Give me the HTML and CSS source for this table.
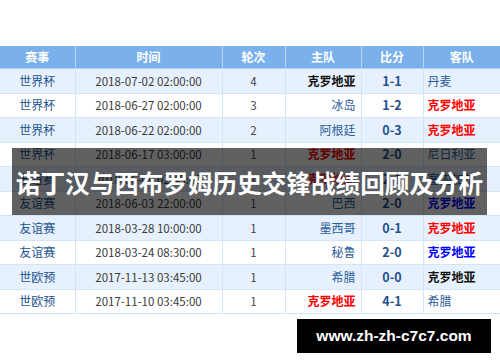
FILE: index.html
```html
<!DOCTYPE html>
<html lang="zh-CN">
<head>
<meta charset="utf-8">
<title>诺丁汉与西布罗姆历史交锋战绩回顾及分析</title>
<link rel="stylesheet" href="styles.css">
</head>
<body>
<div class="page">
  <table class="matches">
    <colgroup>
      <col class="c-event"><col class="c-time"><col class="c-round"><col class="c-home"><col class="c-score"><col class="c-away">
    </colgroup>
    <thead>
      <tr><th>赛事</th><th>时间</th><th>轮次</th><th>主队</th><th>比分</th><th>客队</th></tr>
    </thead>
    <tbody>
      <tr class="alt"><td class="ev">世界杯</td><td class="tm">2018-07-02 02:00:00</td><td class="rd">4</td><td class="home draw">克罗地亚</td><td class="sc">1-1</td><td class="away">丹麦</td></tr>
      <tr><td class="ev">世界杯</td><td class="tm">2018-06-27 02:00:00</td><td class="rd">3</td><td class="home">冰岛</td><td class="sc">1-2</td><td class="away win">克罗地亚</td></tr>
      <tr class="alt"><td class="ev">世界杯</td><td class="tm">2018-06-22 02:00:00</td><td class="rd">2</td><td class="home">阿根廷</td><td class="sc">0-3</td><td class="away win">克罗地亚</td></tr>
      <tr><td class="ev">世界杯</td><td class="tm">2018-06-17 03:00:00</td><td class="rd">1</td><td class="home win">克罗地亚</td><td class="sc">2-0</td><td class="away">尼日利亚</td></tr>
      <tr class="alt"><td class="ev">友谊赛</td><td class="tm">2018-06-09 02:45:00</td><td class="rd">1</td><td class="home win">克罗地亚</td><td class="sc">2-1</td><td class="away">塞内加尔</td></tr>
      <tr><td class="ev">友谊赛</td><td class="tm">2018-06-03 22:00:00</td><td class="rd">1</td><td class="home">巴西</td><td class="sc">2-0</td><td class="away lose">克罗地亚</td></tr>
      <tr class="alt"><td class="ev">友谊赛</td><td class="tm">2018-03-28 10:00:00</td><td class="rd">1</td><td class="home">墨西哥</td><td class="sc">0-1</td><td class="away win">克罗地亚</td></tr>
      <tr><td class="ev">友谊赛</td><td class="tm">2018-03-24 08:30:00</td><td class="rd">1</td><td class="home">秘鲁</td><td class="sc">2-0</td><td class="away lose">克罗地亚</td></tr>
      <tr class="alt"><td class="ev">世欧预</td><td class="tm">2017-11-13 03:45:00</td><td class="rd">1</td><td class="home">希腊</td><td class="sc">0-0</td><td class="away draw">克罗地亚</td></tr>
      <tr><td class="ev">世欧预</td><td class="tm">2017-11-10 03:45:00</td><td class="rd">1</td><td class="home win">克罗地亚</td><td class="sc">4-1</td><td class="away">希腊</td></tr>
    </tbody>
  </table>
  <div class="title-band"><h1 class="title">诺丁汉与西布罗姆历史交锋战绩回顾及分析</h1></div>
  <div class="watermark">www.zh-zh-c7c7.com</div>
</div>
</body>
</html>
```

FILE: styles.css
```css
html, body {
  margin: 0;
  padding: 0;
  background: #ffffff;
}
body {
  font-family: "Noto Sans CJK SC", "Liberation Sans", sans-serif;
  font-size: 12px;
  color: #333333;
}
.page {
  position: relative;
  width: 500px;
  height: 362px;
  overflow: hidden;
  padding-top: 46px;
  box-sizing: border-box;
}
.matches {
  width: 500px;
  border-collapse: collapse;
  table-layout: fixed;
}
.c-event { width: 75px; }
.c-time { width: 147px; }
.c-round { width: 63px; }
.c-home { width: 76px; }
.c-score { width: 62px; }
.c-away { width: 77px; }

.matches th {
  background: #7ab1ec;
  color: #ffffff;
  font-weight: bold;
  font-size: 12px;
  height: 22px;
  padding: 0;
  border: 1px solid #b9d5f5;
  border-top: 0;
  line-height: 22px;
}
.matches th:first-child, .matches td:first-child { border-left: 0; }
.matches th:last-child, .matches td:last-child { border-right: 0; }

.matches td {
  height: 23.5px;
  padding: 0;
  border: 1px solid #d5e5f8;
  line-height: 16px;
  text-align: center;
  background: #ffffff;
}
.matches tr.alt td { background: #e7f1fd; }

.ev { color: #1d5390; }
.tm { color: #3a3a3a; font-size: 11.5px; }
.rd { color: #444444; font-size: 11.5px; }
.home { text-align: right !important; padding-right: 5px !important; color: #2b5d9a; }
.away { text-align: left !important; padding-left: 4px !important; color: #2b5d9a; }
.sc { color: #23508e; font-weight: bold; font-size: 12.5px; }
.win { color: #ff0000; font-weight: bold; }
.lose { color: #0000ff; font-weight: bold; }
.draw { color: #111111; font-weight: bold; }

.title-band {
  position: absolute;
  left: 12px;
  top: 148px;
  width: 475px;
  height: 67px;
  background: rgba(0, 0, 0, 0.62);
  display: flex;
  align-items: center;
  justify-content: center;
}
.title {
  margin: 0;
  color: #ffffff;
  font-family: "Noto Sans CJK SC", sans-serif;
  font-weight: bold;
  font-size: 24.6px;
  line-height: 30px;
  white-space: nowrap;
}
.watermark {
  position: absolute;
  left: 297px;
  top: 319px;
  width: 194px;
  height: 34px;
  background: #000000;
  color: #ffffff;
  font-family: "Liberation Sans", sans-serif;
  font-weight: bold;
  font-size: 15.5px;
  display: flex;
  align-items: center;
  justify-content: center;
}
```
